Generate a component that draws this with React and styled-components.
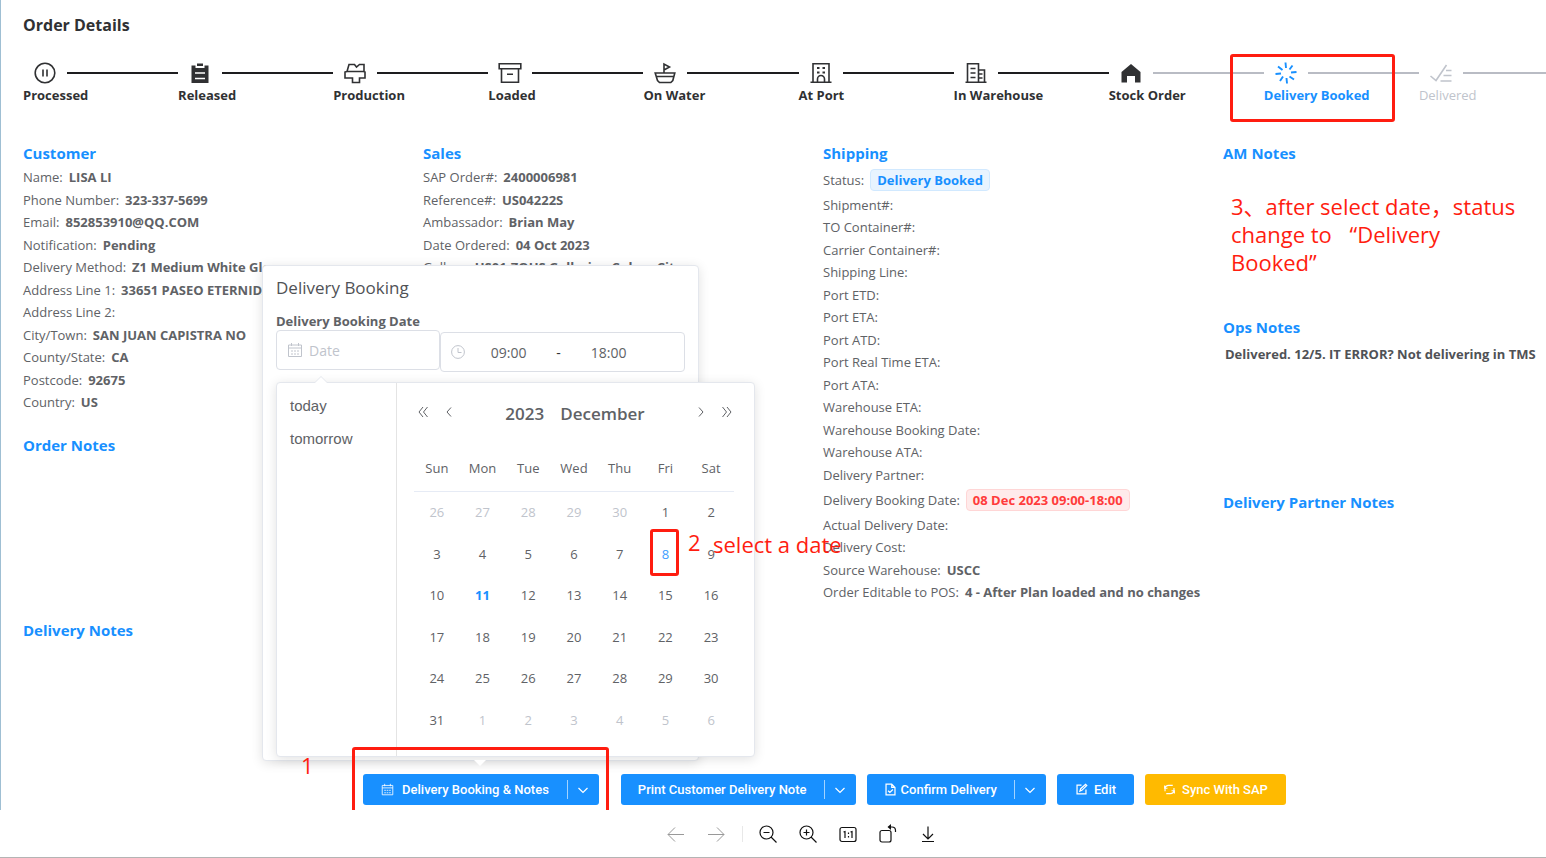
import React from 'react'
import styled, { createGlobalStyle, css } from 'styled-components'

const GlobalStyle = createGlobalStyle`
    * {
        box-sizing: border-box;
    }
    body {
        margin: 0;
        background: #fff;
        color: #606266;
        font-family: 'Open Sans', 'Noto Sans', 'Noto Sans CJK SC', sans-serif;
        font-size: 13px;
    }
    h1, h2, h3, p, ol, ul, dl, dd {
        margin: 0;
        padding: 0;
    }
    button {
        font-family: inherit;
        cursor: pointer;
    }
`

const blue = '#1890ff'
const red = '#ff1d10'

const Viewer = styled.div`
    display: flex;
    flex-direction: column;
    min-height: 100vh;
    border-bottom: 1px solid #b4b4b4;
`
const Page = styled.main`
    position: relative;
    flex: 1;
    display: flex;
    flex-direction: column;
    border-left: 1px solid #9fbfd3;
    overflow: hidden;
`
const Body = styled.div`
    flex: 1;
    padding: 13px 0 0 22px;
`
const PageTitle = styled.h1`
    font-size: 16px;
    line-height: 24px;
    font-weight: 700;
    color: #303133;
`

/* stepper */
const Steps = styled.ol`
    display: grid;
    grid-template-columns: repeat(10, minmax(0, 1fr));
    margin: 24px -28px 0 0;
    list-style: none;
`
const stepColors = { done: '#303133', active: blue, wait: '#c0c4cc' }
const Step = styled.li`
    color: ${(props) => stepColors[props.$state]};
    font-weight: ${(props) => (props.$state === 'wait' ? 400 : 700)};
    line-height: 20px;
    white-space: nowrap;
`
const StepHead = styled.div`
    display: flex;
    align-items: center;
    height: 24px;
    padding-left: 10px;
    svg {
        width: 24px;
        height: 24px;
        margin-right: 10px;
    }
`
const StepLine = styled.span`
    flex: 1;
    height: 2px;
    background: ${(props) => (props.$dark ? '#1d1d1f' : '#b9bcc4')};
`

/* detail columns */
const Columns = styled.div`
    display: grid;
    grid-template-columns: repeat(4, minmax(0, 1fr));
    margin: 38px -77px 0 0;
`
const Section = styled.section`
    min-height: ${(props) => props.$min || 0}px;
`
const SectionTitle = styled.h2`
    height: 23px;
    font-size: 15px;
    line-height: 20px;
    font-weight: 700;
    color: ${blue};
`
const Row = styled.div`
    display: flex;
    align-items: center;
    height: ${(props) => (props.$tall ? 27 : 22)}px;
    gap: 6px;
    white-space: nowrap;
    &:nth-child(even) {
        height: ${(props) => (props.$tall ? 27 : 23)}px;
    }
    dd {
        font-weight: 700;
    }
`
const Tag = styled.span`
    display: block;
    padding: 0 6px;
    border: 1px solid ${(props) => (props.$danger ? '#ffd6d6' : '#d1e9ff')};
    border-radius: 4px;
    background: ${(props) => (props.$danger ? '#ffebeb' : '#e8f4ff')};
    color: ${(props) => (props.$danger ? '#ff3b3b' : blue)};
    line-height: 20px;
`
const Note = styled.p`
    padding: 4px 2px;
    line-height: 20px;
    font-weight: 700;
    font-size: 13px;
    white-space: nowrap;
    color: #505256;
`

/* action bar */
const Actions = styled.div`
    display: flex;
    justify-content: center;
    gap: 11px;
    padding: 0 0 5px 102px;
`
const ButtonGroup = styled.div`
    display: flex;
    margin-right: ${(props) => (props.$spaced ? 11 : 0)}px;
`
const Button = styled.button`
    display: flex;
    align-items: center;
    justify-content: center;
    gap: 6px;
    height: 31px;
    padding: 0 18px;
    border: 0;
    border-radius: 3px;
    background: ${(props) => (props.$warning ? '#ffba00' : blue)};
    color: #fff;
    font-family: Roboto, 'Liberation Sans', sans-serif;
    font-size: 13px;
    font-weight: 500;
    white-space: nowrap;
    ${(props) => props.$split && css`
        gap: ${props.$wide ? 8 : 4}px;
        padding: 0 ${props.$wide ? 18 : 17}px;
        border-radius: 3px 0 0 3px;
    `}
`
const Caret = styled.button`
    display: flex;
    align-items: center;
    height: 31px;
    padding: 0 10px 0 0;
    border: 0;
    border-radius: 0 3px 3px 0;
    background: ${blue};
    color: #fff;
    &:before {
        content: "";
        width: 1px;
        height: 19px;
        margin-right: 9px;
        background: #a3d3ff;
    }
`

/* booking popover */
const panel = css`
    background: #fff;
    border: 1px solid #e4e7ed;
    border-radius: 4px;
    box-shadow: 0 2px 12px rgba(0, 0, 0, 0.12);
`
const Popover = styled.section`
    ${panel}
    position: absolute;
    left: 261px;
    bottom: 49px;
    width: 437px;
    height: 496px;
    padding: 11px 13px;
    &:after {
        content: "";
        position: absolute;
        left: 211px;
        bottom: -6px;
        border: 6px solid transparent;
        border-top-color: #fff;
        border-bottom: 0;
    }
`
const PopoverTitle = styled.h3`
    font-size: 17px;
    line-height: 22px;
    font-weight: 400;
    color: #505256;
`
const DateLabel = styled.label`
    display: block;
    margin-top: 13px;
    line-height: 18px;
    font-weight: 700;
`
const Fields = styled.div`
    display: flex;
    align-items: flex-start;
`
const Field = styled.div`
    display: flex;
    align-items: center;
    width: ${(props) => (props.$range ? 246 : 164)}px;
    height: 40px;
    margin-top: ${(props) => (props.$range ? 2 : 0)}px;
    padding: 0 10px;
    border: 1px solid #dcdfe6;
    border-radius: 4px;
    color: #c0c4cc;
    svg {
        flex: none;
        margin-right: ${(props) => (props.$range ? 4 : 0)}px;
    }
`
const Input = styled.input`
    width: ${(props) => (props.$time ? 80 : 110)}px;
    padding: 0 6px;
    border: 0;
    outline: 0;
    background: transparent;
    color: #606266;
    font-family: inherit;
    font-size: 14px;
    text-align: ${(props) => (props.$time ? 'center' : 'left')};
    &::placeholder {
        color: #c0c4cc;
    }
`
const Dash = styled.span`
    width: 20px;
    text-align: center;
    font-size: 14px;
    color: #303133;
`
const Picker = styled.div`
    ${panel}
    position: absolute;
    left: 13px;
    top: 116px;
    width: 479px;
    height: 375px;
    display: flex;
    &:before {
        content: "";
        position: absolute;
        left: 38px;
        top: -6px;
        border: 6px solid transparent;
        border-bottom-color: #fff;
        border-top: 0;
        filter: drop-shadow(0 -1px 0 #e4e7ed);
    }
`
const Shortcuts = styled.div`
    display: flex;
    flex-direction: column;
    width: 120px;
    padding-top: 6px;
    border-right: 1px solid #e4e4e4;
    button {
        height: 33px;
        padding: 0 13px;
        border: 0;
        background: transparent;
        color: #606266;
        font-family: 'Liberation Sans', sans-serif;
        font-size: 15px;
        text-align: left;
    }
`
const Calendar = styled.div`
    flex: 1;
    padding: 16px 20px 0 17px;
`
const CalendarHead = styled.div`
    display: flex;
    align-items: center;
    height: 26px;
    margin: 0 -6px 0 -4px;
    color: #606266;
`
const Nav = styled.button`
    display: flex;
    justify-content: center;
    width: 26px;
    padding: 0;
    border: 0;
    background: transparent;
    color: #606266;
`
const Month = styled.div`
    flex: 1;
    display: flex;
    justify-content: center;
    gap: 16px;
    padding-top: 4px;
    font-size: 17px;
    line-height: 22px;
    font-weight: 600;
`
const Days = styled.table`
    width: 100%;
    margin-top: 21px;
    border-collapse: collapse;
    table-layout: fixed;
    text-align: center;
    th {
        height: 45px;
        padding: 0;
        border-bottom: 1px solid #e6ebf5;
        font-weight: 400;
    }
    td {
        height: 42px;
        padding: 0;
    }
    tr:nth-child(even) td {
        height: 41px;
    }
`
const dayColors = { muted: '#c0c4cc', selected: '#409eff', today: blue }
const Day = styled.td`
    color: ${(props) => dayColors[props.$kind] || '#606266'};
    font-weight: ${(props) => (props.$kind === 'today' ? 700 : 400)};
`

/* red mark-up drawn over the page */
const MarkBox = styled.div`
    position: absolute;
    left: ${(props) => props.$x}px;
    top: ${(props) => props.$y}px;
    width: ${(props) => props.$w}px;
    height: ${(props) => props.$h}px;
    border: 3px solid ${red};
    border-radius: 3px;
    pointer-events: none;
`
const MarkText = styled.p`
    position: absolute;
    left: ${(props) => props.$x}px;
    top: ${(props) => props.$y}px;
    color: ${red};
    font-size: 22px;
    line-height: 28px;
    white-space: nowrap;
    pointer-events: none;
`
const Quote = styled.span`
    padding-left: 12px;
`

/* image viewer toolbar */
const Toolbar = styled.nav`
    display: flex;
    align-items: center;
    justify-content: center;
    gap: 16px;
    height: 47px;
    padding-left: 58px;
`
const Tool = styled.button`
    display: flex;
    padding: 0;
    border: 0;
    background: transparent;
    color: ${(props) => (props.disabled ? '#999' : '#111')};
`
const ToolDivider = styled.span`
    width: 1px;
    height: 16px;
    margin: 0 -3px 0 -2px;
    background: #e8e8e8;
`

function Icon({ size = 24, box = 24, width = 1.6, children }) {
    return (
        <svg width={size} height={size} viewBox={`0 0 ${box} ${box}`} fill="none" stroke="currentColor" strokeWidth={width} aria-hidden="true">
            {children}
        </svg>
    )
}

const stepIcons = {
    pause: <><circle cx="12" cy="12" r="9.8" /><path d="M10 8.5v7M14 8.5v7" /></>,
    clipboard: <><path d="M3.5 4.5h4v2.5h9V4.5h4V22h-17z" fill="currentColor" stroke="none" /><path d="M9 2.500h6v2.500H9z" fill="currentColor" stroke="none" /><path d="M7 12h10M7 17.500h10" stroke="#fff" /></>,
    production: <path d="M4 10.500 6 3.500h5.500l2 2.500 3-2.500h4.500v7M2 11l2-.500h16.500l1.500.500v6h-5.500v4.500h-7V17H2z" />,
    archive: <><path d="M1.200 2.800h21.600v5H1.200zM3.500 8v13.200h17V8M9 13.200h6" /></>,
    boat: <><path d="M2.200 12h19.600l-2 7.500-2 2H6.500l-2-2zM3 15.500h18M11 12V3l5.500 3-5.500 3" /></>,
    port: <><path d="M1.500 21.300h21M4 21V2.800h16V21M8.500 21v-3a3.500 3.500 0 0 1 7 0V21" /><path d="M8 7h2.500M13.500 7H16M8 11.500h2.500M13.500 11.500H16" strokeWidth="2" /></>,
    warehouse: <><path d="M1.500 21.300h21M3.500 21V2.800h11V21M14.500 9h6v12M6.500 7.500h5M6.500 12h5M6.500 16.500h5M14.500 13h4M14.500 17h4" /></>,
    home: <path d="M12 3 21.500 11v10.500H16V15H8v6.500H2.500V11z" fill="currentColor" stroke="none" />,
    loading: <path d="M11.500 1.500l.500 5.500M12.500 17l.500 5.500M1.500 13l5.500-.500M17 11.500l5.500-.500M4 5.500l4.500 3.500M15.500 15.500l4.500 3M6 20l3-4.500M15.500 8.500l3-4" strokeWidth="1.900" />,
    finished: <path d="M1.500 15l5.500 4.500L17.500 4M17 9.500h5.500M14.500 14.500h8M11.500 20h11" />,
}

const steps = [
    ['Processed', 'pause', 'done'],
    ['Released', 'clipboard', 'done'],
    ['Production', 'production', 'done'],
    ['Loaded', 'archive', 'done'],
    ['On Water', 'boat', 'done'],
    ['At Port', 'port', 'done'],
    ['In Warehouse', 'warehouse', 'done'],
    ['Stock Order', 'home', 'done'],
    ['Delivery Booked', 'loading', 'active'],
    ['Delivered', 'finished', 'wait'],
]

const customer = [
    ['Name:', 'LISA LI'],
    ['Phone Number:', '323-337-5699'],
    ['Email:', '852853910@QQ.COM'],
    ['Notification:', 'Pending'],
    ['Delivery Method:', 'Z1 Medium White Glove'],
    ['Address Line 1:', '33651 PASEO ETERNIDAD'],
    ['Address Line 2:'],
    ['City/Town:', 'SAN JUAN CAPISTRA NO'],
    ['County/State:', 'CA'],
    ['Postcode:', '92675'],
    ['Country:', 'US'],
]

const sales = [
    ['SAP Order#:', '2400006981'],
    ['Reference#:', 'US04222S'],
    ['Ambassador:', 'Brian May'],
    ['Date Ordered:', '04 Oct 2023'],
    ['Gallery:', 'US01-ZOUS Gallerina Culver City'],
]

const shipping = [
    ['Status:', 'Delivery Booked', 'info'],
    ['Shipment#:'],
    ['TO Container#:'],
    ['Carrier Container#:'],
    ['Shipping Line:'],
    ['Port ETD:'],
    ['Port ETA:'],
    ['Port ATD:'],
    ['Port Real Time ETA:'],
    ['Port ATA:'],
    ['Warehouse ETA:'],
    ['Warehouse Booking Date:'],
    ['Warehouse ATA:'],
    ['Delivery Partner:'],
    ['Delivery Booking Date:', '08 Dec 2023 09:00-18:00', 'danger'],
    ['Actual Delivery Date:'],
    ['Delivery Cost:'],
    ['Source Warehouse:', 'USCC'],
    ['Order Editable to POS:', '4 - After Plan loaded and no changes'],
]

const weekDays = ['Sun', 'Mon', 'Tue', 'Wed', 'Thu', 'Fri', 'Sat']

// December 2023 starts on a Friday, so the grid opens on 26 November
const weeks = [0, 1, 2, 3, 4, 5].map((week) =>
    weekDays.map((_, day) => {
        const offset = week * 7 + day - 4
        if (offset < 1) return { label: offset + 30, kind: 'muted' }
        if (offset > 31) return { label: offset - 31, kind: 'muted' }
        const kind = offset === 11 ? 'today' : offset === 8 ? 'selected' : ''
        return { label: offset, kind }
    })
)

function Details({ rows }) {
    return (
        <dl>
            {rows.map(([label, value, tag]) => (
                <Row key={label} $tall={!!tag}>
                    <dt>{label}</dt>
                    {value && <dd>{tag ? <Tag $danger={tag === 'danger'}>{value}</Tag> : value}</dd>}
                </Row>
            ))}
        </dl>
    )
}

const CalendarIcon = ({ size }) => (
    <Icon size={size} box={16} width={1}>
        <path d="M1.500 3h13v11.500h-13zM1.500 6h13M4.500 1v3M11.500 1v3M4 9h2M7 9h2M10 9h2M4 12h2M7 12h2M10 12h2" />
    </Icon>
)
const CaretIcon = () => (
    <Icon size={12} box={12} width={1.2}><path d="M1.500 4 6 8.500 10.500 4" /></Icon>
)

function BookingPopover() {
    return (
        <Popover>
            <PopoverTitle>Delivery Booking</PopoverTitle>
            <DateLabel htmlFor="booking-date">Delivery Booking Date</DateLabel>
            <Fields>
                <Field>
                    <CalendarIcon size={16} />
                    <Input id="booking-date" placeholder="Date" />
                </Field>
                <Field $range>
                    <Icon size={14} box={14} width={1}><circle cx="7" cy="7" r="6.400" /><path d="M7 3v4.500h3.500" /></Icon>
                    <Input $time aria-label="Start time" defaultValue="09:00" />
                    <Dash>-</Dash>
                    <Input $time aria-label="End time" defaultValue="18:00" />
                </Field>
            </Fields>
            <Picker>
                <Shortcuts>
                    <button type="button">today</button>
                    <button type="button">tomorrow</button>
                </Shortcuts>
                <Calendar>
                    <CalendarHead>
                        <Nav aria-label="Previous year"><Icon size={12} box={12} width={1}><path d="M6 1 2 6l4 5M10.500 1l-4 5 4 5" /></Icon></Nav>
                        <Nav aria-label="Previous month"><Icon size={12} box={12} width={1}><path d="M8 1.500 4 6l4 4.500" /></Icon></Nav>
                        <Month><span>2023</span><span>December</span></Month>
                        <Nav aria-label="Next month"><Icon size={12} box={12} width={1}><path d="M4 1.500 8 6l-4 4.500" /></Icon></Nav>
                        <Nav aria-label="Next year"><Icon size={12} box={12} width={1}><path d="m6 1 4 5-4 5M1.500 1l4 5-4 5" /></Icon></Nav>
                    </CalendarHead>
                    <Days>
                        <thead>
                            <tr>{weekDays.map((name) => <th key={name} scope="col">{name}</th>)}</tr>
                        </thead>
                        <tbody>
                            {weeks.map((week, i) => (
                                <tr key={i}>
                                    {week.map((day) => <Day key={day.label} $kind={day.kind}>{day.label}</Day>)}
                                </tr>
                            ))}
                        </tbody>
                    </Days>
                </Calendar>
            </Picker>
        </Popover>
    )
}

function App() {
    return (
        <Viewer>
            <GlobalStyle />
            <Page>
                <Body>
                    <PageTitle>Order Details</PageTitle>
                    <Steps>
                        {steps.map(([label, icon, state], i) => (
                            <Step key={label} $state={state}>
                                <StepHead>
                                    <Icon>{stepIcons[icon]}</Icon>
                                    <StepLine $dark={i < 7} />
                                </StepHead>
                                {label}
                            </Step>
                        ))}
                    </Steps>
                    <Columns>
                        <div>
                            <Section $min={292}>
                                <SectionTitle>Customer</SectionTitle>
                                <Details rows={customer} />
                            </Section>
                            <Section $min={185}>
                                <SectionTitle>Order Notes</SectionTitle>
                            </Section>
                            <Section>
                                <SectionTitle>Delivery Notes</SectionTitle>
                            </Section>
                        </div>
                        <Section>
                            <SectionTitle>Sales</SectionTitle>
                            <Details rows={sales} />
                        </Section>
                        <Section>
                            <SectionTitle>Shipping</SectionTitle>
                            <Details rows={shipping} />
                        </Section>
                        <div>
                            <Section $min={174}>
                                <SectionTitle>AM Notes</SectionTitle>
                            </Section>
                            <Section $min={175}>
                                <SectionTitle>Ops Notes</SectionTitle>
                                <Note>Delivered. 12/5. IT ERROR? Not delivering in TMS</Note>
                            </Section>
                            <Section>
                                <SectionTitle>Delivery Partner Notes</SectionTitle>
                            </Section>
                        </div>
                    </Columns>
                </Body>
                <Actions>
                    <ButtonGroup $spaced>
                        <Button $split $wide><CalendarIcon size={13} />Delivery Booking &amp; Notes</Button>
                        <Caret aria-label="More booking actions"><CaretIcon /></Caret>
                    </ButtonGroup>
                    <ButtonGroup>
                        <Button $split>Print Customer Delivery Note</Button>
                        <Caret aria-label="More print actions"><CaretIcon /></Caret>
                    </ButtonGroup>
                    <ButtonGroup>
                        <Button $split>
                            <Icon size={13} box={16} width={1.5}><path d="M2.500 1.500h7l4 4v9h-11zM9.500 1.500v4h4M5 9.500l2.200 2L11 8" /></Icon>
                            Confirm Delivery
                        </Button>
                        <Caret aria-label="More delivery actions"><CaretIcon /></Caret>
                    </ButtonGroup>
                    <Button>
                        <Icon size={13} box={16} width={1.5}><path d="M8 2.500H2.500v11h11V8M6 10l1-3 6-5.500 1.500 1.500-6 6z" /></Icon>
                        Edit
                    </Button>
                    <Button $warning>
                        <Icon size={13} box={16} width={1.4}><path d="M2.500 10V7a4.500 4.500 0 0 1 4.500-4h5M2 3v3.500h3.500M13.500 6v3a4.500 4.500 0 0 1-4.500 4H4M14 13V9.500h-3.500" /></Icon>
                        Sync With SAP
                    </Button>
                </Actions>
                <BookingPopover />
                <MarkBox $x={1229} $y={54} $w={165} $h={68} />
                <MarkBox $x={649} $y={529} $w={29} $h={47} />
                <MarkBox $x={351} $y={747} $w={257} $h={80} />
                <MarkText $x={300} $y={751}>1</MarkText>
                <MarkText $x={687} $y={528}>2</MarkText>
                <MarkText $x={712} $y={530}>select a date</MarkText>
                <MarkText $x={1230} $y={192}>
                    3、after select date，status<br />
                    change to <Quote>“Delivery</Quote><br />
                    Booked”
                </MarkText>
            </Page>
            <Toolbar aria-label="Image tools">
                <Tool disabled aria-label="Previous"><Icon width={1}><path d="M20 12.500H4M11 5.500l-7 7 7 7" /></Icon></Tool>
                <Tool disabled aria-label="Next"><Icon width={1}><path d="M4 12.500h16M13 5.500l7 7-7 7" /></Icon></Tool>
                <ToolDivider />
                <Tool aria-label="Zoom out"><Icon width={1.2}><circle cx="10.500" cy="10.500" r="6.500" /><path d="m15 15 5.500 5.500M7.500 10.500h6" /></Icon></Tool>
                <Tool aria-label="Zoom in"><Icon width={1.2}><circle cx="10.500" cy="10.500" r="6.500" /><path d="m15 15 5.500 5.500M7.500 10.500h6M10.500 7.500v6" /></Icon></Tool>
                <Tool aria-label="Actual size"><Icon width={1.2}><rect x="4" y="5.500" width="16" height="14" rx="2" /><path d="M7.500 10 9 9.500v6.500M14.500 10 16 9.500v6.500M12.500 10.500V12M12.500 14v1.500" /></Icon></Tool>
                <Tool aria-label="Rotate">
                    <Icon width={1.2}>
                        <rect x="4" y="8.500" width="11" height="11.500" rx="2" />
                        <path d="M12.500 5h3.500a3.500 3.500 0 0 1 3.500 3.500V10" />
                        <path d="M11.500 5 15 2v6z" fill="currentColor" stroke="none" />
                    </Icon>
                </Tool>
                <Tool aria-label="Download"><Icon width={1.2}><path d="M12 4.500v12.500M7 12l5 5 5-5M6 19.500h12" /></Icon></Tool>
            </Toolbar>
        </Viewer>
    )
}

export default App
